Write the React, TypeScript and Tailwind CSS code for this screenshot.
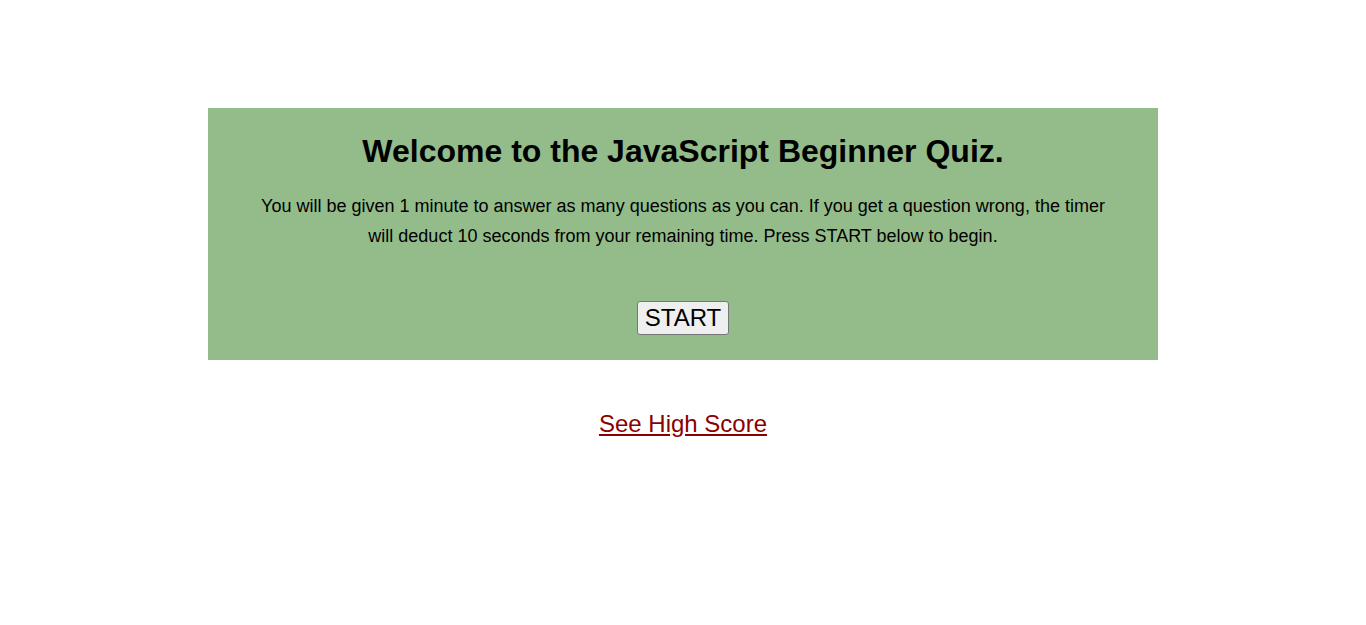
export default function App() {
  return (
    <div className="min-h-[625px] bg-white pt-[108px] text-black" style={{ fontFamily: '"Liberation Sans", Arial, sans-serif' }}>
      <div className="mx-auto w-[950px] h-[252px] bg-[#94bc8a] text-center flex flex-col items-center">
        <h1 className="mt-[25px] text-[32px] font-bold leading-[37px]">Welcome to the JavaScript Beginner Quiz.</h1>
        <p className="mt-[21px] w-[850px] text-[18px] leading-[30px]">
          You will be given 1 minute to answer as many questions as you can. If you get a question wrong, the timer will deduct 10 seconds from your remaining time. Press START below to begin.
        </p>
        <button className="mt-[50px] h-[34px] px-[7px] text-[24px] leading-[28px] bg-[#efefef] border border-[#767676] rounded-[3px]">START</button>
      </div>
      <div className="mt-[50px] text-center">
        <a href="#" className="text-[24px] leading-[28px] text-[#8b0000] underline">See High Score</a>
      </div>
    </div>
  );
}
